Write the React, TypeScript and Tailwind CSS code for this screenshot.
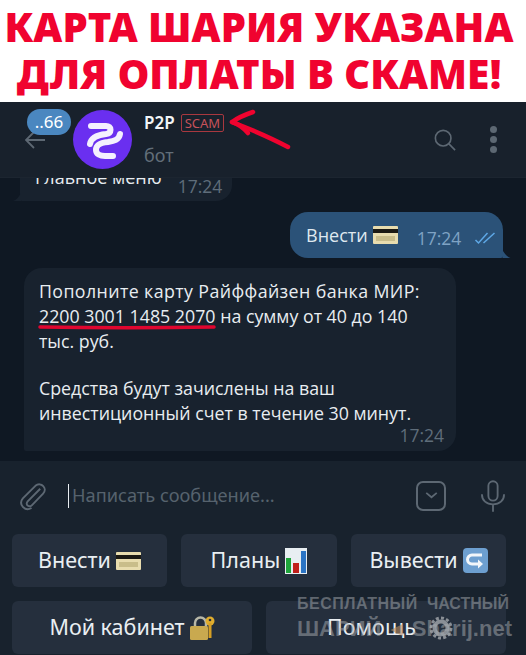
const Card = ({ className = "w-[25px] h-[18px]" }: { className?: string }) => (
  <svg viewBox="0 0 25 18" className={className}>
    <rect x="0" y="0" width="25" height="18" rx="1" fill="#e8dcae" />
    <rect x="0" y="3" width="25" height="4" fill="#1c1a14" />
    <rect x="3" y="10" width="19" height="5" fill="#c9bd8a" />
  </svg>
);

const Chart = () => (
  <svg viewBox="0 0 22 26" className="w-[22px] h-[26px]">
    <rect width="22" height="26" fill="#e8eef2" />
    <rect x="1" y="10" width="5" height="15" fill="#1fa53b" />
    <rect x="8" y="15" width="6" height="10" fill="#c0201c" />
    <rect x="16" y="3" width="5" height="22" fill="#2b74c4" />
  </svg>
);

const ReturnArrow = () => (
  <svg viewBox="0 0 25 25" className="w-[25px] h-[25px]">
    <rect width="25" height="25" rx="4" fill="#6d9fd0" />
    <path d="M19 7H9a4.500 4.500 0 0 0 0 9h9" fill="none" stroke="#f2f6fa" strokeWidth="3" />
    <path d="M15 11.500l5 4.500-5 4.500z" fill="#f2f6fa" />
  </svg>
);

const LockKey = () => (
  <svg viewBox="0 0 25 25" className="w-[25px] h-[25px]">
    <path d="M5 12V8a5.500 5.500 0 0 1 11 0v4" fill="none" stroke="#b8b8a8" strokeWidth="2.500" />
    <rect x="0" y="11" width="18" height="14" rx="1.500" fill="#c9a94f" />
    <circle cx="20" cy="6" r="4.500" fill="#e0ad2e" />
    <rect x="18.500" y="8" width="3" height="15" fill="#d69f24" />
    <circle cx="20" cy="5" r="1.300" fill="#27303d" />
  </svg>
);

const Gear = () => (
  <svg viewBox="0 0 24 24" className="w-[24px] h-[24px] ml-[8px] -mr-[8px] opacity-80">
    <circle cx="12" cy="12" r="6.500" fill="none" stroke="#a4a8ad" strokeWidth="4" />
    <circle cx="12" cy="12" r="10" fill="none" stroke="#a4a8ad" strokeWidth="3" strokeDasharray="3 2.200" />
  </svg>
);

const KeyButton = ({ label, children, className }: { label: string; children: React.ReactNode; className: string }) => (
  <div className={`h-[53px] rounded-[6px] bg-[#252f3d] flex items-center justify-center gap-[5px] text-[21.500px] text-[#e9eef2] ${className}`}>
    {label}
    {children}
  </div>
);

export default function App() {
  return (
    <div className="w-[526px] h-[655px] overflow-hidden relative flex flex-col bg-[#0f1823] font-['Noto_Sans',sans-serif]">
      {/* заголовок */}
      <div className="h-[102px] shrink-0 bg-white flex flex-col items-center pt-[3px] pr-[8px] text-[#f0032f] font-black text-[40px] leading-[47px] whitespace-nowrap">
        <div>КАРТА ШАРИЯ УКАЗАНА</div>
        <div>ДЛЯ ОПЛАТЫ В СКАМЕ!</div>
      </div>

      {/* шапка чата */}
      <div className="h-[75px] shrink-0 bg-[#18212c] flex items-center relative">
        <svg viewBox="0 0 20 18" className="w-[20px] h-[18px] ml-[25px] text-[#5d6873]" fill="none" stroke="currentColor" strokeWidth="1.800">
          <path d="M20 9H1M9 1L1 9l8 8" />
        </svg>
        <div className="w-[59px] h-[59px] ml-[28px] -mt-[1px] rounded-full bg-[#6a2ff0]">
          <svg viewBox="3 4 59 59" className="w-[59px] h-[59px]" fill="none" stroke="#f4f0fe" strokeWidth="6" strokeLinecap="round">
            <path d="M21 20H36C42 20 42 27 36 28C26 29 21 32 20 38" />
            <path d="M50 28C49 34 44 35 38 36C28 37 26 40 26 44C26 48 30 50 35 50H43" />
          </svg>
        </div>
        <div className="ml-[12px] flex flex-col self-start pt-[10px]">
          <div className="flex items-center gap-[6px]">
            <span className="text-[#f2f5f7] text-[17px] leading-[22px] font-semibold">P2P</span>
            <span className="border border-[#a8383f] rounded-[2px] text-[#c7525a] text-[13px] leading-[16px] px-[3px]">SCAM</span>
          </div>
          <span className="text-[#626e79] text-[18px] leading-[22px] mt-[10px]">бот</span>
        </div>
        <div className="ml-auto flex items-center mr-[29px]">
          <svg viewBox="0 0 24 24" className="w-[22px] h-[22px] text-[#5d6873]" fill="none" stroke="currentColor" strokeWidth="1.800">
            <circle cx="10" cy="10" r="8.500" />
            <path d="M16 16l7 7" />
          </svg>
          <div className="ml-[34px] flex flex-col gap-[3px]">
            <span className="w-[7px] h-[7px] rounded-full bg-[#5d6873]" />
            <span className="w-[7px] h-[7px] rounded-full bg-[#5d6873]" />
            <span className="w-[7px] h-[7px] rounded-full bg-[#5d6873]" />
          </div>
        </div>
        <div className="absolute left-[27px] top-[7px] w-[44px] h-[26px] rounded-full bg-[#4a87c0] text-white text-[17px] leading-[26px] text-center">
          ..66
        </div>
        <svg viewBox="0 0 70 45" className="absolute left-[225px] top-[7px] w-[70px] h-[45px]" fill="none" stroke="#f0032f" strokeWidth="4.500" strokeLinecap="round">
          <path d="M7 13C25 20 48 30 63 38" />
          <path d="M7 13C14 8 22 5 28 3M7 13c6 2 12 6 16 11" />
        </svg>
      </div>

      {/* сообщения */}
      <div className="h-[284px] shrink-0 overflow-hidden flex flex-col justify-end pb-[10px] border-t border-[#1c2530] font-['Open_Sans',sans-serif]">
        <div className="relative ml-[20px] w-[212px] h-[46px] shrink-0 rounded-[16px] rounded-bl-[2px] bg-[#18222e] flex items-end pl-[15px] pb-[4px] text-[#e8edf1] text-[18px]">
          <span className="leading-[22px] mb-[9px] whitespace-nowrap">Главное меню</span>
          <span className="ml-[16px] text-[#5f6d7a] text-[17.500px] leading-[22px]">17:24</span>
          <svg viewBox="0 0 8 8" className="absolute -left-[7px] bottom-0 w-[8px] h-[8px]"><path d="M8 0v8H0c3-1 6-4 8-8z" fill="#18222e" /></svg>
        </div>
        <div className="relative self-end mt-[11px] mr-[23px] w-[213px] h-[46px] shrink-0 rounded-[18px] rounded-br-[2px] bg-[#2b5278] flex items-center pl-[16px] text-[#dfe8ef] text-[18px]">
          <span className="leading-[22px] -mt-[1px]">Внести</span>
          <Card className="ml-[5px] -mt-[1px] w-[25px] h-[18px]" />
          <span className="ml-[19px] mt-[6px] text-[#7fa3c4] text-[17.500px]">17:24</span>
          <svg viewBox="0 0 24 14" className="ml-[13px] mt-[6px] w-[25px] h-[14px]" fill="none" stroke="#5ea8e6" strokeWidth="1.500">
            <path d="M1 9l3 3L13 2M9 12L20 2" />
          </svg>
          <svg viewBox="0 0 8 8" className="absolute -right-[8px] bottom-0 w-[9px] h-[8px]"><path d="M0 0v8h8C5 7 2 4 0 0z" fill="#2b5278" /></svg>
        </div>
        <div className="relative mt-[10px] ml-[24px] w-[432px] h-[183px] shrink-0 rounded-[18px] rounded-bl-[2px] bg-[#18222e] pl-[15px] pt-[11px] text-[#e8edf1] text-[17.800px] leading-[25px]">
          <div className="whitespace-nowrap tracking-[0.4px]">Пополните карту Райффайзен банка МИР:</div>
          <div className="whitespace-nowrap">2200 3001 1485 2070 на сумму от 40 до 140</div>
          <div>тыс. руб.</div>
          <div className="mt-[22px] whitespace-nowrap">Средства будут зачислены на ваш</div>
          <div className="whitespace-nowrap">инвестиционный счет в течение 30 минут.</div>
          <span className="absolute right-[12px] bottom-[5px] text-[#5f6d7a] text-[17.500px] leading-[22px]">17:24</span>
          <svg viewBox="0 0 180 6" className="absolute left-[14px] top-[56px] w-[178px] h-[6px]" fill="none" stroke="#e0062f" strokeWidth="3.500" strokeLinecap="round">
            <path d="M2 3C60 4 120 4 178 3" />
          </svg>
        </div>
      </div>

      {/* поле ввода */}
      <div className="h-[69px] shrink-0 bg-[#18222d] flex items-center">
        <svg viewBox="0 0 28 32" className="ml-[19px] w-[27px] h-[31px] text-[#5d6873]" fill="none" stroke="currentColor" strokeWidth="2">
          <path d="M22 9L9 22c-3 3.500 1.500 7 4.500 4L25 14c5-5-2-13-8-8L4 19c-5 6 2 14 9 10" />
        </svg>
        <div className="ml-[22px] w-px h-[24px] bg-[#e8edf1]" />
        <span className="ml-[3px] text-[#56626d] text-[18.200px]">Написать сообщение...</span>
        <div className="ml-auto w-[30px] h-[30px] border-2 border-[#5d6873] rounded-[7px] flex items-center justify-center">
          <svg viewBox="0 0 14 8" className="w-[13px] h-[7px]" fill="none" stroke="#5d6873" strokeWidth="2">
            <path d="M1 1l6 5 6-5" />
          </svg>
        </div>
        <svg viewBox="0 0 26 34" className="ml-[35px] mr-[21px] w-[24px] h-[32px] text-[#5d6873]" fill="none" stroke="currentColor" strokeWidth="2">
          <rect x="8" y="1" width="10" height="21" rx="5" />
          <path d="M1 15c0 7 5 11 12 11s12-4 12-11M13 26v8" />
        </svg>
      </div>

      {/* клавиатура */}
      <div className="flex-1 bg-[#18222d] px-[12px] pt-[4px] flex flex-col gap-[14px]">
        <div className="flex gap-[14px]">
          <KeyButton label="Внести" className="w-[155px]"><Card /></KeyButton>
          <KeyButton label="Планы" className="w-[156px]"><Chart /></KeyButton>
          <KeyButton label="Вывести" className="w-[155px]"><ReturnArrow /></KeyButton>
        </div>
        <div className="flex gap-[14px]">
          <KeyButton label="Мой кабинет" className="w-[240px]"><LockKey /></KeyButton>
          <KeyButton label="Помощь" className="w-[240px]"><Gear /></KeyButton>
        </div>
      </div>

      {/* водяной знак */}
      <div className="absolute left-[297px] top-[594px] w-[215px] font-['Liberation_Sans',sans-serif] font-bold text-[#a7abb0]/50 whitespace-nowrap">
        <div className="flex justify-between w-[212px] text-[16px] leading-[20px]">
          <span className="tracking-[0.5px]">БЕСПЛАТНЫЙ</span>
          <span>ЧАСТНЫЙ</span>
        </div>
        <div className="flex justify-between items-center text-[22px] leading-[26px] mt-[2px]">
          <span>ШАРИЙ</span>
          <span className="text-[#b98a5e]/60 text-[15px]">◀</span>
          <span>Sharij.net</span>
        </div>
      </div>
    </div>
  );
}
